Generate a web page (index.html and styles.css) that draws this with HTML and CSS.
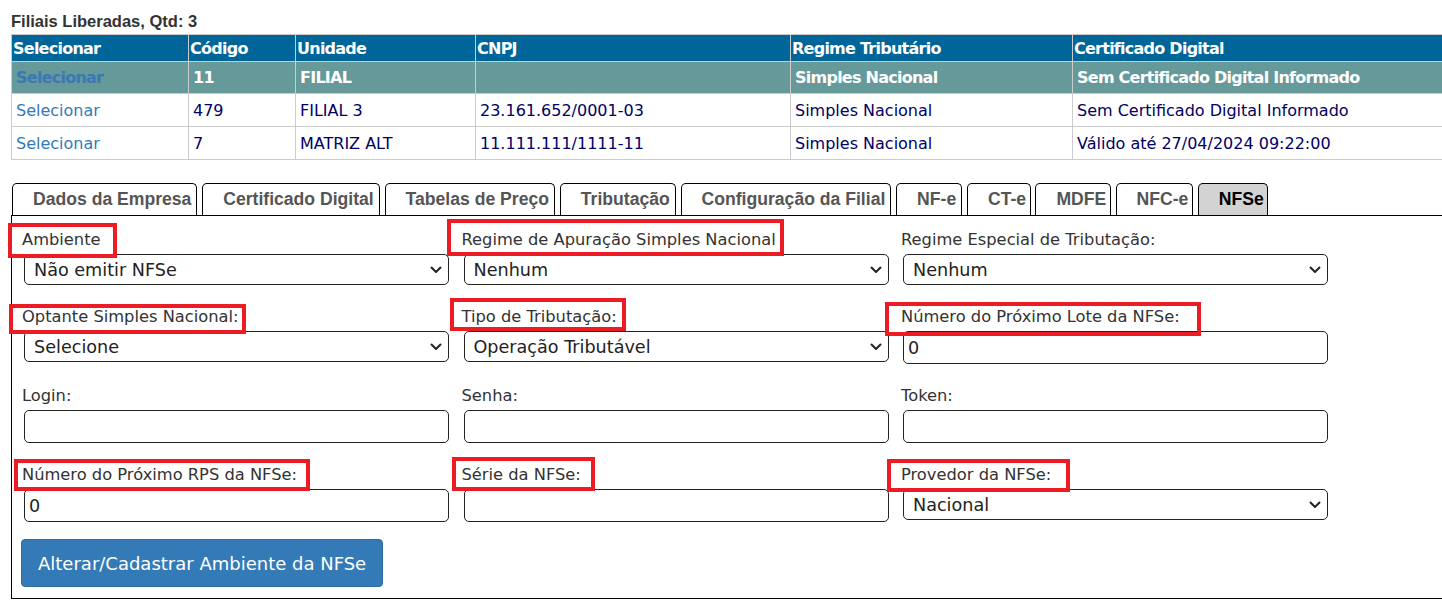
FILE: index.html
```html
<!DOCTYPE html>
<html lang="pt-BR">
<head>
    <meta charset="UTF-8">
    <title>Filiais - NFSe</title>
    <link rel="stylesheet" href="styles.css">
</head>
<body>
<div class="page">
    <div class="title">Filiais Liberadas, Qtd: 3</div>

    <table class="grid">
        <colgroup>
            <col class="c-sel">
            <col class="c-cod">
            <col class="c-uni">
            <col class="c-cnpj">
            <col class="c-reg">
            <col>
        </colgroup>
        <tr class="head">
            <th>Selecionar</th>
            <th>Código</th>
            <th>Unidade</th>
            <th>CNPJ</th>
            <th>Regime Tributário</th>
            <th>Certificado Digital</th>
        </tr>
        <tr class="selected">
            <td><a href="#">Selecionar</a></td>
            <td>11</td>
            <td>FILIAL</td>
            <td></td>
            <td>Simples Nacional</td>
            <td>Sem Certificado Digital Informado</td>
        </tr>
        <tr>
            <td><a href="#">Selecionar</a></td>
            <td>479</td>
            <td>FILIAL 3</td>
            <td>23.161.652/0001-03</td>
            <td>Simples Nacional</td>
            <td>Sem Certificado Digital Informado</td>
        </tr>
        <tr>
            <td><a href="#">Selecionar</a></td>
            <td>7</td>
            <td>MATRIZ ALT</td>
            <td>11.111.111/1111-11</td>
            <td>Simples Nacional</td>
            <td>Válido até 27/04/2024 09:22:00</td>
        </tr>
    </table>

    <div class="tabs">
        <a class="tab" href="#">Dados da Empresa</a>
        <a class="tab" href="#">Certificado Digital</a>
        <a class="tab" href="#">Tabelas de Preço</a>
        <a class="tab" href="#">Tributação</a>
        <a class="tab" href="#">Configuração da Filial</a>
        <a class="tab" href="#">NF-e</a>
        <a class="tab narrow" href="#">CT-e</a>
        <a class="tab narrow" href="#">MDFE</a>
        <a class="tab narrow" href="#">NFC-e</a>
        <a class="tab narrow active" href="#">NFSe</a>
    </div>

    <div class="panel">
        <div class="form-grid">
            <div class="field">
                <label class="hl hl-1">Ambiente</label>
                <div class="select">
                    <select><option>Não emitir NFSe</option></select>
                    <svg viewBox="0 0 12 7"><path d="M1 1 L6 6 L11 1" /></svg>
                </div>
            </div>
            <div class="field">
                <label class="hl hl-2">Regime de Apuração Simples Nacional</label>
                <div class="select">
                    <select><option>Nenhum</option></select>
                    <svg viewBox="0 0 12 7"><path d="M1 1 L6 6 L11 1" /></svg>
                </div>
            </div>
            <div class="field">
                <label>Regime Especial de Tributação:</label>
                <div class="select">
                    <select><option>Nenhum</option></select>
                    <svg viewBox="0 0 12 7"><path d="M1 1 L6 6 L11 1" /></svg>
                </div>
            </div>

            <div class="field">
                <label class="hl hl-3">Optante Simples Nacional:</label>
                <div class="select">
                    <select><option>Selecione</option></select>
                    <svg viewBox="0 0 12 7"><path d="M1 1 L6 6 L11 1" /></svg>
                </div>
            </div>
            <div class="field">
                <label class="hl hl-4">Tipo de Tributação:</label>
                <div class="select">
                    <select><option>Operação Tributável</option></select>
                    <svg viewBox="0 0 12 7"><path d="M1 1 L6 6 L11 1" /></svg>
                </div>
            </div>
            <div class="field">
                <label class="hl hl-5">Número do Próximo Lote da NFSe:</label>
                <input class="text" type="text" value="0">
            </div>

            <div class="field">
                <label>Login:</label>
                <input class="text" type="text">
            </div>
            <div class="field">
                <label>Senha:</label>
                <input class="text" type="password">
            </div>
            <div class="field">
                <label>Token:</label>
                <input class="text" type="text">
            </div>

            <div class="field">
                <label class="hl hl-6">Número do Próximo RPS da NFSe:</label>
                <input class="text" type="text" value="0">
            </div>
            <div class="field">
                <label class="hl hl-7">Série da NFSe:</label>
                <input class="text" type="text">
            </div>
            <div class="field">
                <label class="hl hl-8">Provedor da NFSe:</label>
                <div class="select">
                    <select><option>Nacional</option></select>
                    <svg viewBox="0 0 12 7"><path d="M1 1 L6 6 L11 1" /></svg>
                </div>
            </div>
        </div>

        <button class="btn" type="button">Alterar/Cadastrar Ambiente da NFSe</button>
    </div>
</div>
</body>
</html>
```

FILE: styles.css
```css
html, body {
    margin: 0;
    padding: 0;
    overflow: hidden;
}
body {
    font-family: "DejaVu Sans", Verdana, sans-serif;
    color: #333;
    background: #fff;
}
.page {
    padding-left: 11px;
}
.title {
    font: bold 16.5px/19px "Liberation Sans", Arial, sans-serif;
    color: #333;
    margin: 12px 0 3px;
}

/* grid de filiais */
.grid {
    border-collapse: collapse;
    table-layout: fixed;
    width: 1480px;
    border: 1px solid #ccc;
    font-size: 16px;
    color: #000066;
    margin-bottom: 23px;
}
.grid .c-sel { width: 177px; }
.grid .c-cod { width: 107px; }
.grid .c-uni { width: 180px; }
.grid .c-cnpj { width: 315px; }
.grid .c-reg { width: 282px; }
.grid th {
    background: #006699;
    color: #fff;
    font-weight: bold;
    letter-spacing: -0.75px;
    text-align: left;
    padding: 0 1px;
    border: 1px solid #ccc;
    white-space: nowrap;
}
.grid td {
    padding: 0 4px;
    border: 1px solid #ccc;
    white-space: nowrap;
}
.grid tr.head { height: 27px; }
.grid tr { height: 33px; }
.grid tr.selected { height: 32px; }
.grid a {
    color: #337ab7;
    text-decoration: none;
}
.grid tr.selected td {
    background: #669999;
    color: #fff;
    font-weight: bold;
    letter-spacing: -0.75px;
}
.grid tr.selected td a {
    color: #3a78b5;
}

/* abas */
.tabs {
    display: flex;
    align-items: flex-end;
    gap: 4.8px;
    margin-left: 1px;
}
.tab {
    display: block;
    height: 31px;
    padding: 0 5px 0 20px;
    border: 1px solid #000;
    border-bottom: none;
    border-radius: 5px 5px 0 0;
    font: bold 17.6px/31px "Liberation Sans", Arial, sans-serif;
    color: #555;
    text-decoration: none;
    background: #fff;
    white-space: nowrap;
}
.tab.narrow {
    padding-right: 3.5px;
}
.tab.active {
    background: #d3d3d3;
    color: #000;
}

.panel {
    width: 1480px;
    border: 1px solid #000;
    padding: 14px 0 11px 10px;
}

.form-grid {
    display: grid;
    grid-template-columns: repeat(3, 427px);
    column-gap: 12.5px;
    row-gap: 22px;
}
.field {
    display: flex;
    flex-direction: column;
    align-items: flex-start;
}
.field label {
    position: relative;
    font-size: 16.3px;
    line-height: 20px;
    color: #333;
    margin-bottom: 4px;
    white-space: nowrap;
}

/* marcações em vermelho */
.hl::after {
    content: "";
    position: absolute;
    top: var(--t);
    right: var(--r);
    bottom: var(--b);
    left: var(--l);
    border: 4px solid #ed1c24;
    pointer-events: none;
    z-index: 2;
}
.hl-1 { --t: -7px; --r: -16px; --b: -8px; --l: -14px; }
.hl-2 { --t: -11px; --r: -8px; --b: -6px; --l: -15px; }
.hl-3 { --t: -3px; --r: -7px; --b: -7px; --l: -13px; }
.hl-4 { --t: -9px; --r: -9px; --b: -4px; --l: -12px; }
.hl-5 { --t: -5px; --r: -21px; --b: -9px; --l: -16px; }
.hl-6 { --t: -6px; --r: -13px; --b: -6px; --l: -8px; }
.hl-7 { --t: -8px; --r: -14px; --b: -6px; --l: -10px; }
.hl-8 { --t: -6px; --r: -19px; --b: -7px; --l: -14px; }

.select {
    position: relative;
    margin-left: 2px;
    width: 425px;
}
.select select {
    appearance: none;
    -webkit-appearance: none;
    display: block;
    width: 100%;
    height: 31px;
    box-sizing: border-box;
    border: 1px solid #222;
    border-radius: 5px;
    background: #fff;
    font: 17.6px "DejaVu Sans", Verdana, sans-serif;
    color: #222;
    padding: 0 30px 0 9px;
    margin: 0;
}
.select svg {
    position: absolute;
    right: 7px;
    top: 12px;
    width: 12px;
    height: 7px;
    fill: none;
    stroke: #222;
    stroke-width: 2;
    pointer-events: none;
}
.text {
    display: block;
    box-sizing: border-box;
    width: 425px;
    height: 33px;
    margin: 0 0 0 2px;
    border: 1px solid #222;
    border-radius: 5px;
    padding: 0 4px;
    font: 17.6px "DejaVu Sans", Verdana, sans-serif;
    color: #222;
    background: #fff;
}

.btn {
    display: block;
    margin: 17px 0 0 -1px;
    height: 48px;
    padding: 0 16px;
    background: #337ab7;
    border: 1px solid #2e6da4;
    border-radius: 4px;
    color: #fff;
    font: 18px "DejaVu Sans", Verdana, sans-serif;
    cursor: pointer;
}
```
